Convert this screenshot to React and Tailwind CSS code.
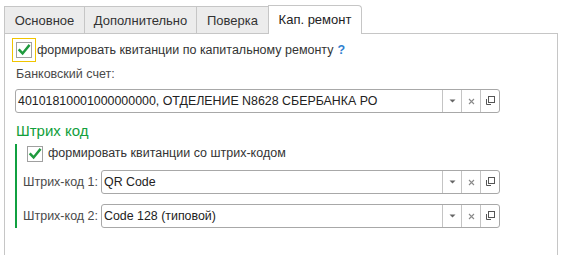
import React from 'react';

function Check({ focused }) {
  const box = (
    <span className="flex h-[16px] w-[16px] items-center justify-center border border-[#a0a0a0] bg-white">
      <svg width="14" height="14" viewBox="0 0 14 14">
        <path d="M2.5 7.2 L5.6 10.4 L11.8 2.8" fill="none" stroke="#1f9a3e" strokeWidth="2.4" strokeLinecap="square" />
      </svg>
    </span>
  );
  if (!focused) return box;
  return (
    <span className="flex h-[24px] w-[24px] items-center justify-center border border-[#f0c400]">{box}</span>
  );
}

function OpenIcon() {
  return (
    <svg width="10" height="10" viewBox="0 0 10 10">
      <rect x="3.5" y="0.5" width="6" height="6" fill="none" stroke="#555" />
      <path d="M1.5 3 V8.5 H6" fill="none" stroke="#555" />
    </svg>
  );
}

function Field({ value, className = '' }) {
  return (
    <div className={`flex h-[24px] rounded-[3px] border border-[#a8a8a8] bg-white ${className}`}>
      <div className="flex-1 truncate pl-[2px] text-[12.4px] leading-[22px] text-[#222]">{value}</div>
      <div className="flex w-[19px] items-center justify-center border-l border-[#c4c4c4]">
        <svg width="7" height="4" viewBox="0 0 7 4">
          <path d="M0.5 0.5 H6.5 L3.5 3.5 Z" fill="#666" />
        </svg>
      </div>
      <div className="flex w-[19px] items-center justify-center border-l border-[#c4c4c4]">
        <svg width="7" height="7" viewBox="0 0 7 7">
          <path d="M1 1 L6 6 M6 1 L1 6" stroke="#8a8a8a" strokeWidth="1.1" />
        </svg>
      </div>
      <div className="flex w-[19px] items-center justify-center border-l border-[#c4c4c4]">
        <OpenIcon />
      </div>
    </div>
  );
}

const tabs = [
  { label: 'Основное', w: 'w-[81px]' },
  { label: 'Дополнительно', w: 'w-[113px]' },
  { label: 'Поверка', w: 'w-[73px]' },
];

export default function App() {
  return (
    <div
      className="h-[255px] w-[563px] overflow-hidden bg-white text-[12.5px] text-[#333]"
      style={{ fontFamily: '"Liberation Sans", Arial, sans-serif' }}
    >
      <div className="flex h-[34px] items-end pl-[4px]">
        {tabs.map((t, i) => (
          <div
            key={t.label}
            className={`flex h-[28px] items-center justify-center border border-[#c6c6c6] bg-[#ececec] pt-px text-[13px] text-[#333] ${t.w} ${i > 0 ? '-ml-px' : ''}`}
          >
            {t.label}
          </div>
        ))}
        <div className="-ml-px flex h-[29px] w-[94px] items-center justify-center rounded-tr-[4px] border border-b-0 border-[#c6c6c6] bg-white text-[13px] text-[#222]">
          Кап. ремонт
        </div>
        <div className="h-full w-[196px] border-b border-[#c6c6c6]" />
      </div>

      <div className="ml-[4px] h-[221px] w-[554px] border-x border-[#c6c6c6] pt-[4px]">
        <div className="flex h-[24px] items-center pl-[7px]">
          <Check focused />
          <span className="ml-[1px]">формировать квитанции по капитальному ремонту</span>
          <span className="ml-[4px] font-bold text-[#2f7fd0]">?</span>
        </div>

        <div className="mt-[5px] pl-[11px] leading-[15px] text-[#4a4a4a]">Банковский счет:</div>
        <Field className="ml-[10px] mt-[7px] w-[485px]" value="40101810001000000000, ОТДЕЛЕНИЕ N8628 СБЕРБАНКА РО" />

        <div className="mt-[8px] pl-[11px] text-[15px] leading-[20px] text-[#12a03c]">Штрих код</div>

        <div className="ml-[10px] mt-[3px] border-l-2 border-[#10a040]">
          <div className="flex h-[18px] items-center pl-[10px] pt-[1px]">
            <Check />
            <span className="ml-[5px]">формировать квитанции со штрих-кодом</span>
          </div>
          <div className="mt-[8px] flex items-center">
            <span className="w-[84px] pl-[6px] text-[#4a4a4a]">Штрих-код 1:</span>
            <Field className="w-[399px]" value="QR Code" />
          </div>
          <div className="mt-[10px] flex items-center">
            <span className="w-[84px] pl-[6px] text-[#4a4a4a]">Штрих-код 2:</span>
            <Field className="w-[399px]" value="Code 128 (типовой)" />
          </div>
        </div>
      </div>
    </div>
  );
}
